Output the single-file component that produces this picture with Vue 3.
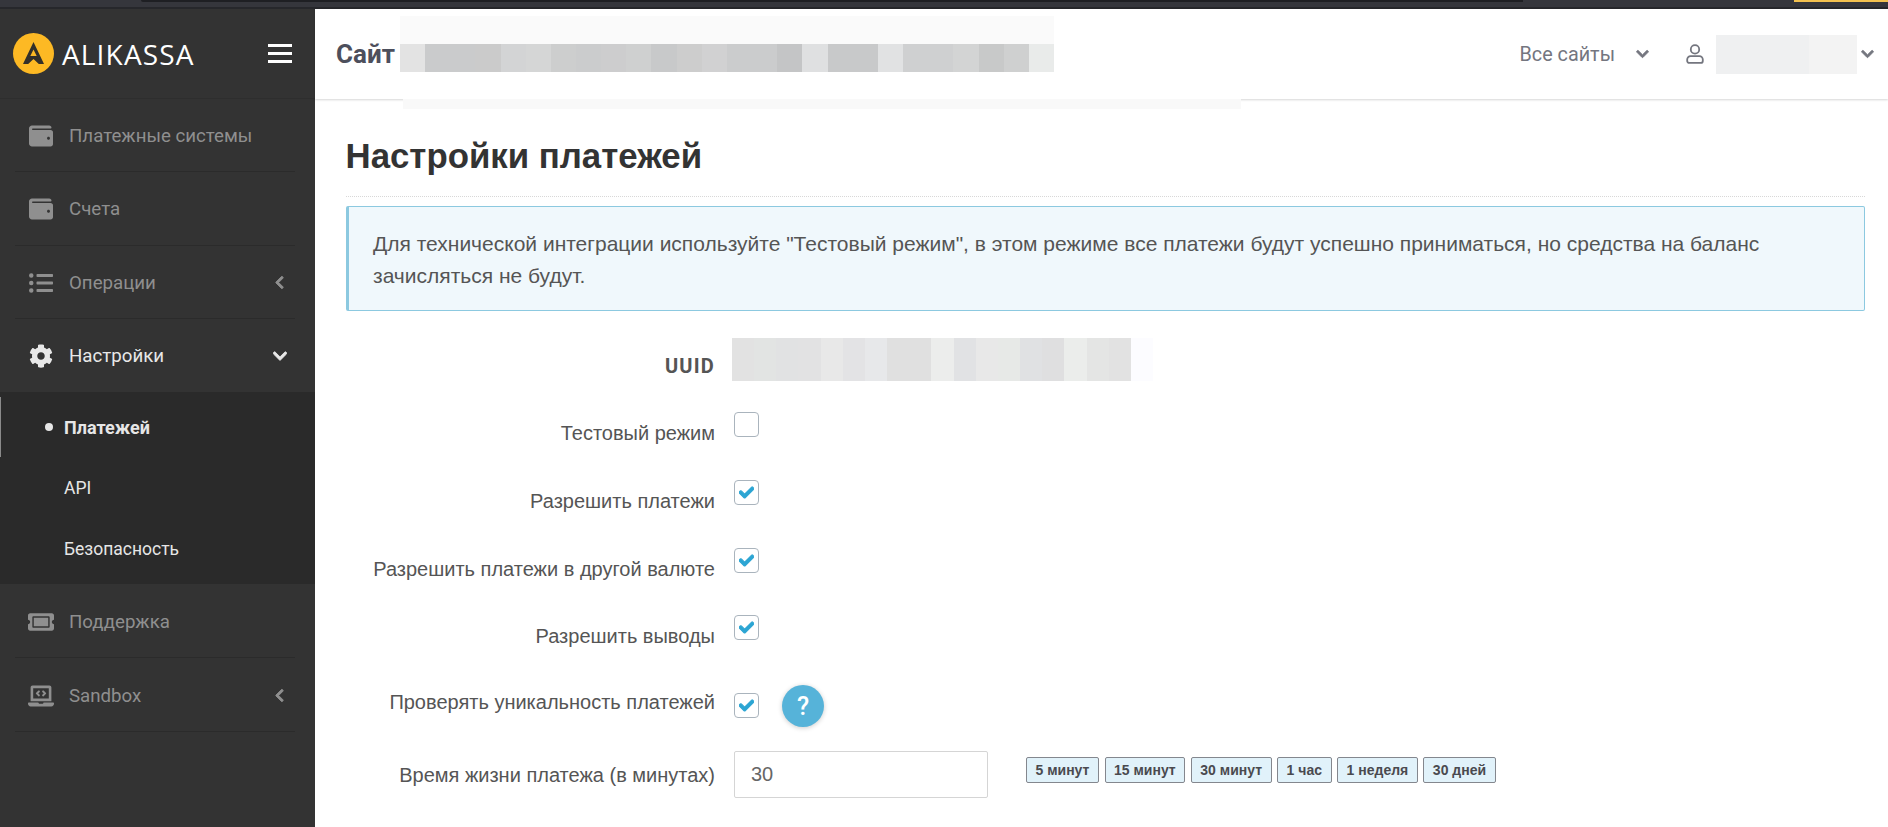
<template>
  <div class="window">
    <div class="browser-strip">
      <div class="strip-tab"></div>
      <div class="strip-badge"></div>
    </div>
    <div class="layout">
      <aside class="sidebar">
        <div class="brand">
          <svg class="brand-mark" viewBox="0 0 41 41">
            <circle cx="20.5" cy="20.5" r="20.5" fill="#fdb924" />
            <path fill="#33302a" fill-rule="evenodd" d="M20.5 9 31 31h-5.2l-5.3-5-5.3 5H10zM20.5 16.5 17.3 23h6.4z" />
          </svg>
          <span class="brand-name">ALIKASSA</span>
          <button class="burger"><span></span><span></span><span></span></button>
        </div>
        <nav class="menu">
          <template v-for="item in menu" :key="item.label">
            <a class="menu-item" :class="{ open: item.open }">
              <svg class="menu-icon" :viewBox="item.box"><path fill="currentColor" :d="item.icon" /></svg>
              <span class="menu-label">{{ item.label }}</span>
              <svg v-if="item.arrow === 'left'" class="arrow-left" viewBox="0 0 320 512"><path fill="currentColor" stroke="currentColor" stroke-width="30" :d="chevronLeft" /></svg>
              <svg v-if="item.arrow === 'down'" class="arrow-down" viewBox="0 0 448 512"><path fill="currentColor" stroke="currentColor" stroke-width="30" :d="chevronDown" /></svg>
            </a>
            <div v-if="item.open" class="submenu">
              <a class="sub-item active"><i class="dot"></i>Платежей</a>
              <a class="sub-item">API</a>
              <a class="sub-item">Безопасность</a>
            </div>
          </template>
        </nav>
      </aside>

      <div class="main">
        <header class="topbar">
          <span class="site-title">Сайт</span>
          <div class="site-blur">
            <div class="site-blur-top"></div>
            <span v-for="(c, i) in siteShades" :key="i" :style="{ background: c }"></span>
          </div>
          <div class="top-right">
            <span class="all-sites">Все сайты</span>
            <svg class="top-chevron" viewBox="0 0 448 512"><path fill="currentColor" stroke="currentColor" stroke-width="30" :d="chevronDown" /></svg>
            <svg class="user-icon" viewBox="0 0 18 20" fill="none" stroke="currentColor" stroke-width="1.8">
              <circle cx="9" cy="5.4" r="4.2" />
              <path d="M4.6 12.2h8.8a3.4 3.4 0 0 1 3.4 3.4v1.3a2 2 0 0 1-2 2H3.200a2 2 0 0 1-2-2v-1.300a3.400 3.400 0 0 1 3.400-3.400z" />
            </svg>
            <div class="user-blur"></div>
            <svg class="top-chevron last" viewBox="0 0 448 512"><path fill="currentColor" stroke="currentColor" stroke-width="30" :d="chevronDown" /></svg>
          </div>
        </header>
        <div class="header-ghost"></div>

        <section class="content">
          <h1 class="page-title">Настройки платежей</h1>
          <div class="alert">
            Для технической интеграции используйте "Тестовый режим", в этом режиме все платежи будут успешно приниматься, но средства на баланс зачисляться не будут.
          </div>

          <form class="form" @submit.prevent>
            <div class="row row-uuid">
              <label class="uuid-label">UUID</label>
              <div class="uuid-blur">
                <span v-for="(c, i) in uuidShades" :key="i" :style="{ background: c }"></span>
              </div>
            </div>
            <div v-for="row in checks" :key="row.label" class="row row-check" :class="row.cls">
              <label>{{ row.label }}</label>
              <span class="checkbox">
                <svg v-if="row.checked" viewBox="0 0 512 512"><path fill="#2ca5d3" stroke="#2ca5d3" stroke-width="36" :d="check" /></svg>
              </span>
              <button v-if="row.help" class="help">?</button>
            </div>
            <div class="row row-time">
              <label>Время жизни платежа (в минутах)</label>
              <input class="time-input" type="text" value="30" />
              <div class="presets">
                <button v-for="p in presets" :key="p" class="preset">{{ p }}</button>
              </div>
            </div>
          </form>
        </section>
      </div>
    </div>
  </div>
</template>

<script setup>
const chevronDown =
  "M207.029 381.476L12.686 187.132c-9.373-9.373-9.373-24.569 0-33.941l22.667-22.667c9.357-9.357 24.522-9.375 33.901-.04L224 284.505l154.745-154.021c9.379-9.335 24.544-9.317 33.901.04l22.667 22.667c9.373 9.373 9.373 24.569 0 33.941L240.971 381.476c-9.373 9.372-24.569 9.372-33.942 0z";
const chevronLeft =
  "M34.52 239.03L228.87 44.69c9.37-9.37 24.57-9.37 33.94 0l22.67 22.67c9.36 9.36 9.37 24.52.04 33.9L131.49 256l154.02 154.75c9.34 9.38 9.32 24.54-.04 33.9l-22.67 22.67c-9.37 9.37-24.57 9.37-33.94 0L34.52 272.97c-9.37-9.37-9.37-24.57 0-33.94z";
const check =
  "M173.898 439.404l-166.4-166.4c-9.997-9.997-9.997-26.206 0-36.204l36.203-36.204c9.997-9.998 26.207-9.998 36.204 0L192 312.69 432.095 72.596c9.997-9.997 26.207-9.997 36.204 0l36.203 36.204c9.997 9.997 9.997 26.206 0 36.204l-294.4 294.401c-9.998 9.997-26.207 9.997-36.204-.001z";
const wallet =
  "M461.2 128H80c-8.84 0-16-7.16-16-16s7.16-16 16-16h384c8.84 0 16-7.16 16-16 0-26.51-21.49-48-48-48H64C28.65 32 0 60.65 0 96v320c0 35.35 28.65 64 64 64h397.2c28.02 0 50.8-21.53 50.8-48V176c0-26.47-22.78-48-50.8-48zM416 336c-17.67 0-32-14.33-32-32s14.33-32 32-32 32 14.33 32 32-14.33 32-32 32z";
const listUl =
  "M48 48a48 48 0 1 0 48 48 48 48 0 0 0-48-48zm0 160a48 48 0 1 0 48 48 48 48 0 0 0-48-48zm0 160a48 48 0 1 0 48 48 48 48 0 0 0-48-48zm448 16H176a16 16 0 0 0-16 16v32a16 16 0 0 0 16 16h320a16 16 0 0 0 16-16v-32a16 16 0 0 0-16-16zm0-320H176a16 16 0 0 0-16 16v32a16 16 0 0 0 16 16h320a16 16 0 0 0 16-16V80a16 16 0 0 0-16-16zm0 160H176a16 16 0 0 0-16 16v32a16 16 0 0 0 16 16h320a16 16 0 0 0 16-16v-32a16 16 0 0 0-16-16z";
const cog =
  "M487.4 315.7l-42.6-24.6c4.3-23.2 4.3-47 0-70.2l42.6-24.6c4.9-2.8 7.1-8.6 5.5-14-11.1-35.6-30-67.8-54.7-94.6-3.8-4.1-10-5.1-14.8-2.3L380.8 110c-17.9-15.4-38.5-27.3-60.8-35.1V25.8c0-5.6-3.9-10.5-9.4-11.7-36.7-8.2-74.3-7.8-109.2 0-5.5 1.2-9.4 6.1-9.4 11.7V75c-22.2 7.9-42.8 19.8-60.8 35.1L88.7 85.5c-4.9-2.8-11-1.9-14.8 2.3-24.7 26.7-43.6 58.9-54.7 94.6-1.7 5.4.6 11.2 5.5 14L67.3 221c-4.3 23.2-4.3 47 0 70.2l-42.6 24.6c-4.9 2.8-7.1 8.6-5.5 14 11.1 35.6 30 67.8 54.7 94.6 3.8 4.1 10 5.1 14.8 2.3l42.6-24.6c17.9 15.4 38.5 27.3 60.8 35.1v49.2c0 5.6 3.9 10.5 9.4 11.7 36.7 8.2 74.3 7.8 109.2 0 5.5-1.2 9.4-6.1 9.4-11.7v-49.2c22.2-7.9 42.8-19.8 60.8-35.1l42.6 24.6c4.9 2.8 11 1.9 14.8-2.3 24.7-26.7 43.6-58.9 54.7-94.6 1.5-5.5-.7-11.3-5.6-14.1zM256 336c-44.1 0-80-35.9-80-80s35.9-80 80-80 80 35.9 80 80-35.9 80-80 80z";
const ticket =
  "M128 160h320v192H128V160zm400 96c0 26.51 21.49 48 48 48v96c0 26.51-21.49 48-48 48H48c-26.51 0-48-21.49-48-48v-96c26.51 0 48-21.49 48-48s-21.49-48-48-48v-96c0-26.51 21.49-48 48-48h480c26.51 0 48 21.49 48 48v96c-26.51 0-48 21.49-48 48zm-48-104c0-13.255-10.745-24-24-24H120c-13.255 0-24 10.745-24 24v208c0 13.255 10.745 24 24 24h336c13.255 0 24-10.745 24-24V152z";
const laptop =
  "M255.03 261.65c6.25 6.25 16.38 6.25 22.63 0l11.31-11.31c6.25-6.25 6.25-16.38 0-22.63L253.25 192l35.71-35.72c6.25-6.25 6.25-16.38 0-22.63l-11.31-11.31c-6.25-6.25-16.38-6.25-22.63 0l-58.34 58.34c-6.25 6.25-6.25 16.38 0 22.63l58.35 58.34zm96.01-11.3l11.31 11.31c6.25 6.25 16.38 6.25 22.63 0l58.34-58.34c6.25-6.25 6.25-16.38 0-22.63l-58.34-58.35c-6.25-6.25-16.38-6.25-22.63 0l-11.31 11.31c-6.25 6.25-6.25 16.38 0 22.63L386.75 192l-35.71 35.72c-6.25 6.25-6.25 16.38 0 22.63zM624 416H381.54c-.74 19.81-14.71 32-32.74 32H288c-18.69 0-33.02-17.47-32.77-32H16c-8.8 0-16 7.2-16 16v16c0 35.2 28.8 64 64 64h512c35.2 0 64-28.8 64-64v-16c0-8.8-7.2-16-16-16zM576 48c0-26.4-21.6-48-48-48H112C85.6 0 64 21.6 64 48v336h512V48zm-64 272H128V64h384v256z";

const menu = [
  { label: "Платежные системы", icon: wallet, box: "0 0 512 512" },
  { label: "Счета", icon: wallet, box: "0 0 512 512" },
  { label: "Операции", icon: listUl, box: "0 0 512 512", arrow: "left" },
  { label: "Настройки", icon: cog, box: "0 0 512 512", arrow: "down", open: true },
  { label: "Поддержка", icon: ticket, box: "0 0 576 512" },
  { label: "Sandbox", icon: laptop, box: "0 0 640 512", arrow: "left" },
];

const checks = [
  { label: "Тестовый режим", checked: false, cls: "r-test" },
  { label: "Разрешить платежи", checked: true, cls: "r-allow" },
  { label: "Разрешить платежи в другой валюте", checked: true, cls: "r-currency" },
  { label: "Разрешить выводы", checked: true, cls: "r-withdraw" },
  { label: "Проверять уникальность платежей", checked: true, cls: "r-unique", help: true },
];

const presets = ["5 минут", "15 минут", "30 минут", "1 час", "1 неделя", "30 дней"];

// пиксели размытых блоков
const siteShades = [
  "#e3e3e3", "#cacbcc", "#cacbcc", "#cbcbcb", "#d3d4d5", "#d5d6d6", "#cdcece", "#cbcccd",
  "#cdcdce", "#cfd0d0", "#c8c9ca", "#cdcdcd", "#d1d1d2", "#cbcccd", "#cbcccd", "#c4c5c6",
  "#dfe0e1", "#c8c9ca", "#c8c9ca", "#e1e2e3", "#cfd0d1", "#cfd0d1", "#d3d4d4", "#c8c9c9",
  "#cfd0d0", "#e9ebea",
];
const uuidShades = [
  "#e2e2e2", "#e2e4e3", "#e1e2e3", "#e2e2e3", "#e8e8e8", "#e3e3e5", "#e7e8ea", "#e0e0e0",
  "#e0e0e0", "#ecedec", "#e1e2e4", "#e8e8e8", "#e7e9e7", "#e0e1e3", "#dfdfe0", "#ebedeb",
  "#e4e5e4", "#e2e2e2", "#fcfcff",
];
</script>

<style>
html,
body {
  margin: 0;
  height: 100%;
  overflow: hidden;
  background: #fff;
}
</style>

<style scoped>
* {
  box-sizing: border-box;
}

.window {
  width: 1888px;
  height: 827px;
  display: flex;
  flex-direction: column;
  overflow: hidden;
  font-family: "Liberation Sans", Arial, sans-serif;
}

.browser-strip {
  height: 9px;
  flex: none;
  background: #35363c;
  border-bottom: 2px solid #26272b;
  position: relative;
}
.strip-tab {
  position: absolute;
  left: 141px;
  top: 0;
  width: 1382px;
  height: 2px;
  background: #1e1f23;
  border-radius: 0 0 0 4px;
}
.strip-badge {
  position: absolute;
  left: 1794px;
  top: 0;
  right: 0;
  height: 2px;
  background: #f3c14f;
}

.layout {
  flex: 1;
  display: flex;
  min-height: 0;
}

/* sidebar */
.sidebar {
  width: 315px;
  flex: none;
  background: #333333;
}
.brand {
  height: 90px;
  display: flex;
  align-items: center;
  padding: 0 23px 0 13px;
  border-bottom: 1px solid #2e2e2e;
}
.brand-mark {
  width: 41px;
  height: 41px;
  flex: none;
}
.brand-name {
  margin-left: 8px;
  font-family: "Open Sans", sans-serif;
  font-size: 28px;
  letter-spacing: 1.15px;
  color: #fff;
  flex: 1;
}
.burger {
  width: 24px;
  padding: 0;
  border: 0;
  background: none;
  display: flex;
  flex-direction: column;
  gap: 5px;
  margin-top: -1px;
}
.burger span {
  height: 3px;
  background: #fff;
}

.menu {
  font-family: Roboto, sans-serif;
}
.menu-item {
  height: 73.3px;
  display: flex;
  align-items: center;
  margin: 0 20px 0 15px;
  padding: 2px 10px 0 13px;
  border-bottom: 1px solid #2b2b2b;
  color: #8f8f8f;
  font-size: 18.7px;
}
.menu-item.open {
  color: #e8e8e8;
  border-bottom: 0;
  padding-top: 0;
}
.submenu ~ .menu-item {
  height: 74px;
}
.menu-icon {
  width: 26px;
  height: 24px;
  flex: none;
  margin-right: 15px;
}
.menu-label {
  flex: 1;
}
.arrow-left {
  width: 9px;
  height: 15px;
  margin-right: 1px;
}
.arrow-down {
  width: 14px;
  height: 16px;
  margin-right: -2px;
}

.submenu {
  background: #2a2a2a;
  height: 192px;
  padding-top: 5px;
}
.sub-item {
  height: 61px;
  display: flex;
  align-items: center;
  padding-left: 64px;
  color: #e6e6e6;
  font-size: 17.5px;
}
.sub-item.active {
  font-weight: 700;
  font-size: 18px;
  border-left: 1px solid #8a8a8a;
  padding-left: 44px;
  height: 60px;
}
.dot {
  width: 8px;
  height: 8px;
  border-radius: 50%;
  background: #e6e6e6;
  margin-right: 11px;
}

/* header */
.main {
  flex: 1;
  min-width: 0;
  position: relative;
}
.topbar {
  height: 90px;
  display: flex;
  align-items: center;
  padding: 0 14px 0 21px;
  background: #fff;
  box-shadow: 0 1px 2px rgba(0, 0, 0, 0.16);
}
.site-title {
  font-family: Roboto, sans-serif;
  font-weight: 700;
  font-size: 26px;
  color: #4d4f5c;
}
.site-blur {
  position: relative;
  display: flex;
  width: 654px;
  height: 28px;
  margin-left: 5px;
  margin-top: 7px;
}
.site-blur > span {
  flex: 1;
}
.site-blur-top {
  position: absolute;
  left: 0;
  right: 0;
  top: -28px;
  height: 28px;
  background: #fafafa;
}
.top-right {
  margin-left: auto;
  display: flex;
  align-items: center;
  color: #74767f;
}
.all-sites {
  font-family: Roboto, sans-serif;
  font-size: 19.8px;
}
.top-chevron {
  width: 13px;
  height: 14px;
  margin-left: 21px;
}
.top-chevron.last {
  margin-left: 4px;
}
.user-icon {
  width: 18px;
  height: 20px;
  margin-left: 37px;
}
.user-blur {
  width: 141px;
  height: 39px;
  margin-left: 12px;
  background: linear-gradient(90deg, #eff0f1 0, #eff0f1 66%, #f3f3f3 66%);
}
.header-ghost {
  position: absolute;
  left: 88px;
  top: 90px;
  width: 838px;
  height: 10px;
  background: #f9f9f9;
}

/* content */
.content {
  padding: 0 23px 0 31px;
  color: #555;
}
.page-title {
  margin: 0;
  height: 98px;
  padding-top: 37px;
  margin-left: -0.5px;
  border-bottom: 1px dotted #d8d8d8;
  font-size: 34.8px;
  line-height: 40px;
  font-weight: 700;
  color: #333;
}
.alert {
  margin-top: 9px;
  height: 105px;
  padding: 21px 24px 0 24px;
  background: #f0f8fc;
  border: 1px solid #8cc9e0;
  border-left-width: 3px;
  border-radius: 2px;
  font-size: 21px;
  line-height: 32px;
}

.form {
  padding-top: 27px;
}
.row {
  display: grid;
  grid-template-columns: 369px auto auto 1fr;
  column-gap: 19px;
  align-items: start;
}
.row label {
  grid-column: 1;
  text-align: right;
  font-size: 20px;
  line-height: 24px;
  color: #555;
}

.row-uuid {
  height: 74px;
}
.row-uuid .uuid-label {
  padding-top: 16px;
  font-size: 20px;
  font-weight: 700;
  letter-spacing: 1.2px;
  font-family: Roboto, sans-serif;
}
.uuid-blur {
  grid-column: 2 / 5;
  display: flex;
  width: 421px;
  height: 43px;
  margin-left: -2px;
}
.uuid-blur span {
  flex: 1;
}

.row-check {
  height: 68px;
}
.row-check label {
  padding-top: 9px;
}
.r-currency {
  height: 67px;
}
.r-withdraw {
  height: 75px;
}
.r-unique {
  height: 58px;
  margin-top: 3px;
}
.r-unique label {
  padding-top: 0;
  margin-top: -3px;
}
.checkbox {
  width: 25px;
  height: 25px;
  background: #fff;
  border: 1px solid #aab4bd;
  border-radius: 4px;
  display: flex;
  align-items: center;
  justify-content: center;
}
.checkbox svg {
  width: 15px;
  height: 15px;
}
.help {
  width: 42px;
  height: 42px;
  margin-top: -8px;
  margin-left: 4px;
  border: 0;
  border-radius: 50%;
  background: #56b3d9;
  color: #fff;
  font-family: Roboto, sans-serif;
  font-size: 25px;
  font-weight: 500;
  box-shadow: 0 1px 5px rgba(0, 0, 0, 0.2);
}

.row-time {
  grid-template-columns: 369px 254px 1fr;
  column-gap: 19px;
}
.row-time label {
  padding-top: 12px;
}
.time-input {
  width: 254px;
  height: 47px;
  padding: 0 16px;
  border: 1px solid #d5d5d5;
  border-radius: 2px;
  font-family: "Liberation Sans", sans-serif;
  font-size: 20px;
  color: #666;
  outline: none;
}
.presets {
  display: flex;
  gap: 5.6px;
  margin-left: 19px;
  margin-top: 6px;
}
.preset {
  height: 26px;
  padding: 0 8.5px;
  background: #e1f2fa;
  border: 1px solid #84878e;
  border-radius: 2px;
  font-family: "Liberation Sans", sans-serif;
  font-size: 14px;
  font-weight: 700;
  color: #4a4a4f;
}
</style>
